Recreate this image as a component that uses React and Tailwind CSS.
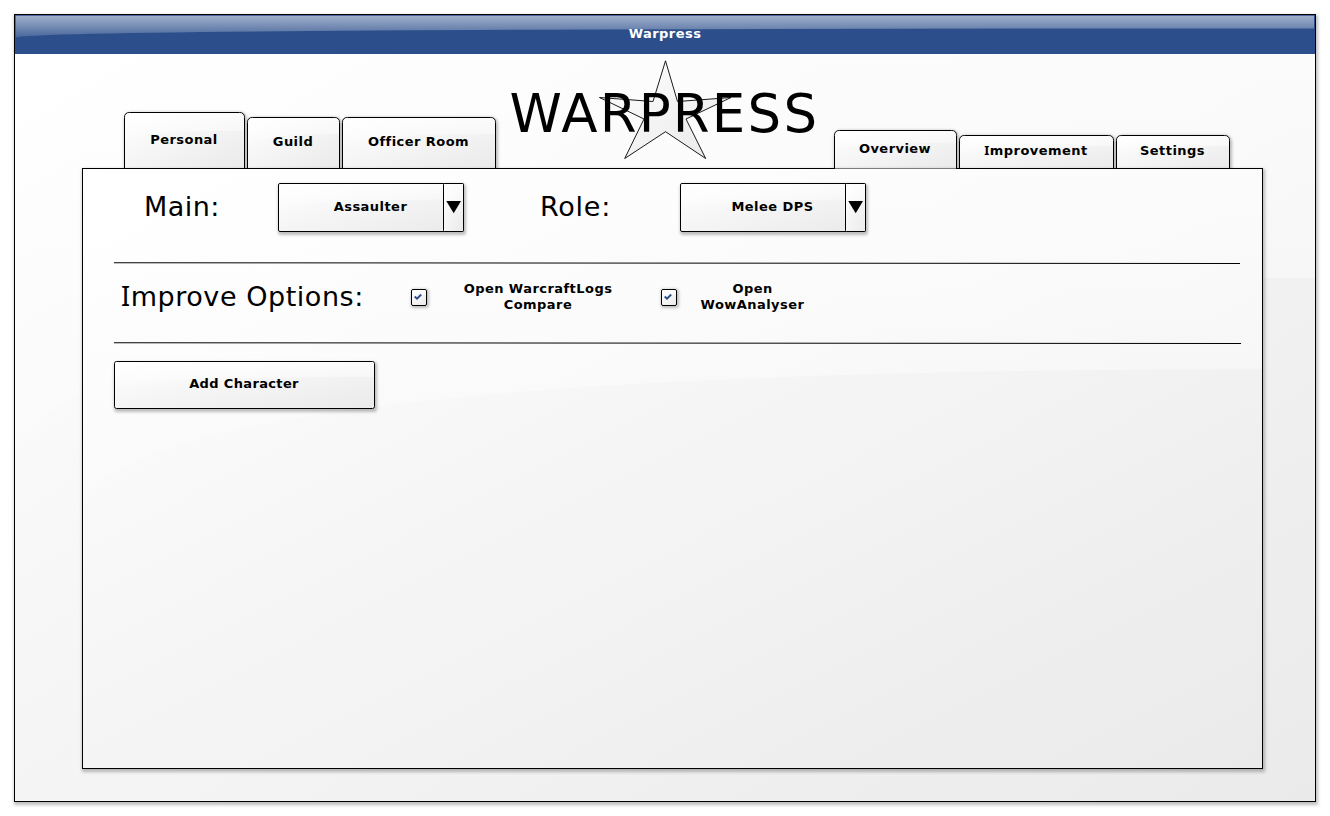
import React, { useId } from "react";

function Surface({ w, h, r = 0, tab = false }) {
  const id = useId().replace(/[^a-zA-Z0-9]/g, "");
  const y1 = h * 0.335;
  const y0 = h * 0.58;
  const outline = tab
    ? `M.5 ${h} V${r + 0.5} Q.5 .5 ${r + 0.5} .5 H${w - r - 0.5} Q${w - 0.5} .5 ${w - 0.5} ${r + 0.5} V${h}`
    : null;
  return (
    <svg className="absolute inset-0 overflow-visible" width={w} height={h} viewBox={`0 0 ${w} ${h}`} aria-hidden="true">
      <defs>
        <linearGradient id={`${id}b`} x1="0" y1="0" x2="1" y2="1">
          <stop offset="0" stopColor="#ffffff" />
          <stop offset="1" stopColor="#eaeaea" />
        </linearGradient>
        <linearGradient id={`${id}g`} x1="0" y1="0" x2="0" y2="1">
          <stop offset="0" stopColor="#ffffff" stopOpacity="0.65" />
          <stop offset="0.58" stopColor="#ffffff" stopOpacity="0.4" />
          <stop offset="1" stopColor="#ffffff" stopOpacity="0.05" />
        </linearGradient>
      </defs>
      {tab ? <path d={outline} fill={`url(#${id}b)`} stroke="#000" /> : <rect x=".5" y=".5" width={w - 1} height={h - 1} rx={r} fill={`url(#${id}b)`} stroke="#000" />}
      <path d={`M1 ${y0} Q1 ${y1} ${w - 1} ${y1} V${1 + r} Q${w - 1} 1 ${w - 1 - r} 1 H${1 + r} Q1 1 1 ${1 + r} Z`} fill={`url(#${id}g)`} />
    </svg>
  );
}

function TitleGloss() {
  return (
    <svg className="absolute inset-0" width="1300" height="39" viewBox="0 0 1300 39" aria-hidden="true">
      <defs>
        <linearGradient id="titleGloss" x1="0" y1="0" x2="0" y2="1">
          <stop offset="0" stopColor="#fff" stopOpacity=".55" />
          <stop offset="1" stopColor="#fff" stopOpacity=".13" />
        </linearGradient>
      </defs>
      <path d="M.7 22.700Q.7 13.400 1299 13.400V.7H.7Z" fill="url(#titleGloss)" />
    </svg>
  );
}

function Tab({ w, h, pad, open = false, children }) {
  return (
    <button className="relative shrink-0 rounded-t-[6px] shadow-[1px_1px_3px_1px_rgba(0,0,0,0.25)]" style={{ width: w, height: h }}>
      <Surface w={w} h={h} r={5} tab />
      <span className="absolute inset-x-0 pr-px text-center leading-4" style={{ top: pad }}>{children}</span>
      {open && <span className="absolute inset-x-px -bottom-px z-10 h-px bg-[#7d7d7d]" />}
    </button>
  );
}

function Select({ children }) {
  return (
    <button className="relative flex h-[49px] w-[186px] shrink-0 rounded-[2px] tracking-[0.45px] shadow-[1px_2px_3px_1px_rgba(0,0,0,0.25)]">
      <Surface w={186} h={49} r={1.5} />
      <span className="relative w-[165px] pt-[16px] pl-[20px] text-center leading-4">{children}</span>
      <span className="relative h-[49px] w-[21px]">
        <Surface w={21} h={49} r={1} />
        <svg className="relative mt-[18px] ml-[3px]" width="15" height="13" viewBox="0 0 15 13"><path d="M.3 0H15L7.700 12.300Z" /></svg>
      </span>
    </button>
  );
}

function Checkbox() {
  return (
    <span role="checkbox" aria-checked="true" className="relative block h-[17px] w-4 shrink-0 rounded-[2px] shadow-[1px_1px_3px_1px_rgba(0,0,0,0.25)]">
      <Surface w={16} h={17} r={1.5} />
      <svg className="absolute top-[4px] left-[3px]" width="8" height="8" viewBox="0 0 8 8" fill="none"><path d="M.7 3.500L3 5.600L7.200 1.500" stroke="#2c4f8c" strokeWidth="1.9" /></svg>
    </span>
  );
}

function Divider({ w }) {
  return (
    <svg className="block" width={w} height="2" viewBox={`0 0 ${w} 2`} aria-hidden="true">
      <path d={`M0 .75L${w} 1.5`} stroke="#000" strokeWidth="1" />
    </svg>
  );
}

function SerifI() {
  return <span className="font-['Noto_Sans',sans-serif] leading-none">I</span>;
}

export default function App() {
  return (
    <div className="h-[816px] w-[1330px] overflow-hidden bg-white p-[14px] font-['DejaVu_Sans',sans-serif] text-[13px] font-bold tracking-[0.45px] text-black">
      <div className="relative flex h-[788px] w-[1302px] flex-col shadow-[1px_2px_3px_1px_rgba(0,0,0,0.25)]">
        <Surface w={1302} h={788} />
        <header className="relative mx-px mt-px h-[39px] bg-[#2c4f8c]">
          <TitleGloss />
          <h1 className="relative pt-[11px] text-center leading-4 text-white">Warpress</h1>
        </header>
        <div className="relative flex h-[114px] items-end pl-[110px]">
          <nav className="flex items-end gap-[2px]">
            <Tab w={121} h={56} pad={20}>Personal</Tab>
            <Tab w={93} h={51} pad={17}>Guild</Tab>
            <Tab w={154} h={51} pad={17}>Officer Room</Tab>
          </nav>
          <div className="relative h-[114px] w-[338px]">
            <svg className="absolute top-[6px] left-[102px]" width="134" height="100" viewBox="0 0 134 100">
              <defs>
                <linearGradient id="star" x1="0" y1="0" x2="1" y2="1">
                  <stop offset="0" stopColor="#fff" />
                  <stop offset="1" stopColor="#e9e9e9" />
                </linearGradient>
              </defs>
              <path d="M67.500 .8L79.500 41.500L133 37.500L88 59L107.700 98.500L67.500 71.700L26.700 98.500L46 59L1.500 37.500L55 41.500Z" fill="url(#star)" stroke="#000" strokeWidth=".9" />
            </svg>
            <div className="relative pt-[31px] pl-[13.500px] text-[53px] leading-[58px] font-normal tracking-[2.2px] whitespace-nowrap">WARPRESS</div>
          </div>
          <nav className="flex items-end gap-[2px]">
            <Tab w={123} h={38} pad={11} open>Overview</Tab>
            <Tab w={155} h={33} pad={8}><SerifI />mprovement</Tab>
            <Tab w={114} h={33} pad={8}>Settings</Tab>
          </nav>
        </div>
        <main className="relative ml-[68px] h-[601px] w-[1181px] shadow-[1px_2px_3px_1px_rgba(0,0,0,0.25)]">
          <Surface w={1181} h={601} />
          <div className="relative flex h-[94px] pt-[15px]">
            <div className="w-[196px] pt-[8px] pl-[62px] text-[27px] leading-8 font-normal tracking-[0.45px]">Main:</div>
            <Select>Assaulter</Select>
            <div className="w-[216px] pt-[8px] pl-[76px] text-[27px] leading-8 font-normal tracking-[0.75px]">Role:</div>
            <Select>Melee DPS</Select>
          </div>
          <div className="relative pl-8"><Divider w={1126} /></div>
          <div className="relative flex h-[78px]">
            <div className="w-[329px] pt-[17px] pl-[39px] text-[27px] leading-8 font-normal tracking-[0.55px]"><SerifI />mprove Options:</div>
            <div className="pt-[25px]"><Checkbox /></div>
            <div className="w-[234px] pt-[17px] pr-3 text-center leading-4">Open WarcraftLogs<br />Compare</div>
            <div className="pt-[25px]"><Checkbox /></div>
            <div className="w-[151px] pt-[17px] text-center leading-4">Open<br />WowAnalyser</div>
          </div>
          <div className="relative pl-8"><Divider w={1127} /></div>
          <button className="relative mt-[17px] ml-8 block h-[48px] w-[261px] rounded-[2px] leading-4 tracking-[0.35px] shadow-[1px_2px_3px_1px_rgba(0,0,0,0.25)]">
            <Surface w={261} h={48} r={2} />
            <span className="relative block pr-px pb-[2px]">Add Character</span>
          </button>
        </main>
      </div>
    </div>
  );
}
